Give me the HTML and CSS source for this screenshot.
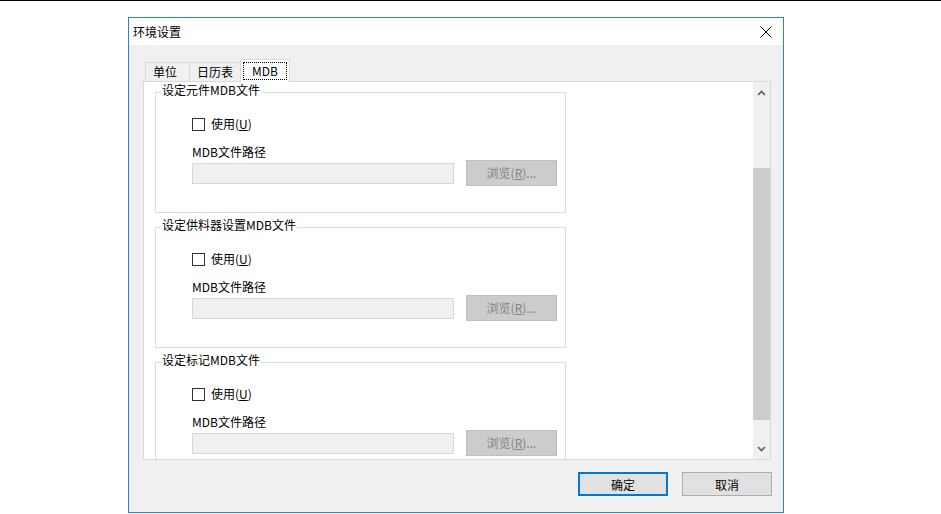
FILE: index.html
```html
<!DOCTYPE html>
<html lang="zh-CN">
<head>
    <meta charset="UTF-8">
    <title>环境设置</title>
    <link rel="stylesheet" href="styles.css">
</head>
<body>

<div class="topline"></div>

<div class="dialog">
    <div class="titlebar">
        <span class="title">环境设置</span>
        <svg class="close" width="12" height="12" viewBox="0 0 12 12">
            <path d="M0.5 0.5L11.5 11.5M11.5 0.5L0.5 11.5" stroke="#000" stroke-width="1" fill="none"/>
        </svg>
    </div>

    <div class="dialog-body">
        <div class="tabs">
            <div class="tab tab-unit">单位</div>
            <div class="tab tab-cal">日历表</div>
            <div class="tab tab-active"><span class="focus">MDB</span></div>
        </div>

        <div class="panel">
            <div class="scroll-content">
                <div class="group">
                    <div class="group-title">设定元件MDB文件</div>
                    <label class="check-row"><span class="checkbox"></span>使用(<u>U</u>)</label>
                    <div class="path-label">MDB文件路径</div>
                    <div class="path-row">
                        <div class="path-input"></div>
                        <div class="browse">浏览(<u>R</u>)...</div>
                    </div>
                </div>

                <div class="group">
                    <div class="group-title">设定供料器设置MDB文件</div>
                    <label class="check-row"><span class="checkbox"></span>使用(<u>U</u>)</label>
                    <div class="path-label">MDB文件路径</div>
                    <div class="path-row">
                        <div class="path-input"></div>
                        <div class="browse">浏览(<u>R</u>)...</div>
                    </div>
                </div>

                <div class="group">
                    <div class="group-title">设定标记MDB文件</div>
                    <label class="check-row"><span class="checkbox"></span>使用(<u>U</u>)</label>
                    <div class="path-label">MDB文件路径</div>
                    <div class="path-row">
                        <div class="path-input"></div>
                        <div class="browse">浏览(<u>R</u>)...</div>
                    </div>
                </div>
            </div>

            <div class="scrollbar">
                <div class="arrow">
                    <svg width="9" height="6" viewBox="0 0 9 6"><path d="M1 5L4.5 1.5L8 5" stroke="#606060" stroke-width="1.6" fill="none"/></svg>
                </div>
                <div class="thumb"></div>
                <div class="arrow arrow-down">
                    <svg width="9" height="6" viewBox="0 0 9 6"><path d="M1 1L4.5 4.5L8 1" stroke="#606060" stroke-width="1.6" fill="none"/></svg>
                </div>
            </div>
        </div>

        <div class="footer">
            <button class="btn btn-default">确定</button>
            <button class="btn">取消</button>
        </div>
    </div>
</div>

</body>
</html>
```

FILE: styles.css
```css
body {
    margin: 0;
    padding: 0;
    background-color: #fff;
    font-family: "Noto Sans CJK SC", "Microsoft YaHei", sans-serif;
    font-size: 12px;
    color: #000;
}

.topline {
    border-top: 1px solid #000;
}

.dialog {
    box-sizing: border-box;
    width: 656px;
    height: 496px;
    margin: 16px 0 0 128px;
    border: 1px solid #2b7fd4;
    display: flex;
    flex-direction: column;
}

.titlebar {
    height: 27px;
    background-color: #fff;
    display: flex;
    align-items: center;
    justify-content: space-between;
    padding-left: 4px;
}

.title {
    line-height: 16px;
}

.close {
    margin-right: 11px;
}

.dialog-body {
    flex: 1;
    background-color: #f0f0f0;
    padding-top: 14px;
}

/* tabs */
.tabs {
    display: flex;
    align-items: flex-end;
    height: 22px;
    margin-left: 16px;
}

.tab {
    box-sizing: border-box;
    height: 19px;
    border: 1px solid #d9d9d9;
    border-bottom: none;
    background-color: #f0f0f0;
    line-height: 18px;
    padding-left: 7px;
}

.tab-unit {
    width: 45px;
}

.tab-cal {
    width: 53px;
    margin-left: -1px;
}

.tab-active {
    position: relative;
    z-index: 1;
    width: 50px;
    height: 23px;
    margin-left: -2px;
    margin-bottom: -1px;
    padding: 2px;
    background-color: #fff;
}

.tab-active .focus {
    display: block;
    box-sizing: border-box;
    height: 18px;
    border: 1px dotted #000;
    line-height: 15px;
    text-align: center;
}

/* panel */
.panel {
    box-sizing: border-box;
    width: 628px;
    height: 379px;
    margin-left: 14px;
    border: 1px solid #d9d9d9;
    background-color: #fff;
    display: flex;
    overflow: hidden;
}

.scroll-content {
    flex: 1;
    padding: 10px 0 0 11px;
    overflow: hidden;
}

.group {
    box-sizing: border-box;
    width: 411px;
    border: 1px solid #dcdcdc;
    padding: 0 0 26px 36px;
    margin-bottom: 14px;
}

.group-title {
    display: table;
    margin: -10px 0 0 -31px;
    padding: 0 1px;
    background-color: #fff;
    line-height: 14px;
}

.check-row {
    display: flex;
    align-items: center;
    height: 16px;
    margin-top: 19px;
    line-height: 16px;
}

.checkbox {
    box-sizing: border-box;
    width: 13px;
    height: 13px;
    border: 1px solid #333;
    background-color: #fff;
    margin-right: 6px;
}

.path-label {
    margin-top: 12px;
    line-height: 16px;
}

.path-row {
    display: flex;
    align-items: center;
    height: 26px;
}

.path-input {
    box-sizing: border-box;
    width: 262px;
    height: 21px;
    border: 1px solid #d7d7d7;
    background-color: #f0f0f0;
    margin-right: 12px;
}

.browse {
    box-sizing: border-box;
    width: 91px;
    height: 26px;
    border: 1px solid #bfbfbf;
    background-color: #cccccc;
    color: #838383;
    line-height: 24px;
    text-align: center;
}

/* scrollbar */
.scrollbar {
    width: 17px;
    background-color: #f0f0f0;
    display: flex;
    flex-direction: column;
}

.arrow {
    height: 21px;
    display: flex;
    align-items: center;
    justify-content: center;
}

.thumb {
    height: 252px;
    margin-top: 65px;
    background-color: #cdcdcd;
}

.arrow-down {
    margin-top: auto;
}

/* footer */
.footer {
    display: flex;
    justify-content: flex-end;
    gap: 14px;
    margin-top: 12px;
    padding-right: 11px;
}

.btn {
    box-sizing: border-box;
    width: 90px;
    height: 24px;
    border: 1px solid #adadad;
    background-color: #e1e1e1;
    font-family: inherit;
    font-size: 12px;
    color: #000;
    padding: 0;
}

.btn-default {
    border: 2px solid #0078d7;
}
```
